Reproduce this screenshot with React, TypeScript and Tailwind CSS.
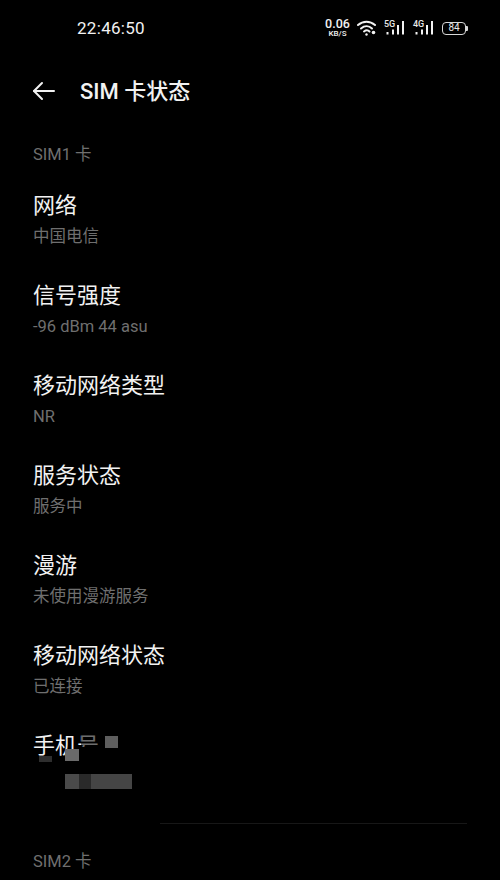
const FONT = "font-['Roboto','Noto_Sans_CJK_SC',sans-serif]"

const rows = [
  { title: '网络', value: '中国电信' },
  { title: '信号强度', value: '-96 dBm 44 asu' },
  { title: '移动网络类型', value: 'NR' },
  { title: '服务状态', value: '服务中' },
  { title: '漫游', value: '未使用漫游服务' },
  { title: '移动网络状态', value: '已连接' },
]

function Row({ title, value }: { title: string; value: string }) {
  return (
    <div className="flex h-[90px] flex-col">
      <div className="h-[32px] text-[22px] leading-[32px] text-[#f2f2f2]">{title}</div>
      <div className="mt-[5px] h-[20px] text-[16.5px] leading-[20px] text-[#6f6f6f]">{value}</div>
    </div>
  )
}

function Bars({ label }: { label: string }) {
  return (
    <div className="relative h-[16px] w-[20px]">
      <span className="absolute left-0 top-0 text-[9px] font-medium leading-[9px] text-[#e8e8e8]">{label}</span>
      <svg className="absolute left-0 top-0" width="20" height="16" viewBox="0 0 20 16" fill="#f2f2f2">
        <rect x="2.500" y="12" width="2" height="2.500" />
        <rect x="8" y="9.500" width="2" height="5" />
        <rect x="13" y="5" width="2" height="9.500" />
        <rect x="18" y="1" width="2" height="13.500" />
      </svg>
    </div>
  )
}

function Mosaic({ className }: { className: string }) {
  return <div className={`absolute ${className}`} />
}

export default function App() {
  return (
    <div className={`h-[880px] w-[500px] overflow-hidden bg-black ${FONT}`}>
      <div className="flex h-[56px] items-center pl-[77px] pr-[32px]">
        <span className="mt-[1px] text-[17px] tracking-[0.3px] text-[#f2f2f2]">22:46:50</span>
        <div className="ml-auto flex items-center">
          <div className="flex w-[25px] flex-col items-center gap-[2px] font-medium text-[#f2f2f2]">
            <span className="text-[12.5px] leading-[10px]">0.06</span>
            <span className="text-[8px] leading-[6px]">KB/S</span>
          </div>
          <svg className="ml-[7px]" width="20" height="16" viewBox="0 0 20 16" fill="none" stroke="#f2f2f2" strokeWidth="2" strokeLinecap="round">
            <path d="M1 5c5-4.500 12-4.500 17 0" />
            <path d="M4 8.500c3.500-3 8-3 11 0" />
            <path d="M7 11.500c2-1.500 4-1.500 5.500 0" />
            <circle cx="9.500" cy="14.500" r="1.200" fill="#f2f2f2" stroke="none" />
            <circle cx="16.500" cy="12.500" r="1.800" fill="#f2f2f2" stroke="none" />
          </svg>
          <div className="ml-[7px]"><Bars label="5G" /></div>
          <div className="ml-[9px]"><Bars label="4G" /></div>
          <div className="ml-[9px] flex items-center">
            <div className="flex h-[13px] w-[24px] items-center justify-center rounded-[4px] border border-[#d8d8d8] text-[10px] leading-none text-[#e8e8e8]">84</div>
            <div className="h-[5px] w-[2px] rounded-r-[1px] bg-[#d8d8d8]" />
          </div>
        </div>
      </div>

      <div className="flex h-[70px] items-center pl-[32px]">
        <svg width="23" height="20" viewBox="0 0 23 20" fill="none" stroke="#f2f2f2" strokeWidth="2" strokeLinecap="round" strokeLinejoin="round">
          <path d="M22 10H2" />
          <path d="M10 2l-8 8 8 8" />
        </svg>
        <h1 className="ml-[25px] text-[22px] font-medium text-[#f2f2f2]">SIM 卡状态</h1>
      </div>

      <div className="px-[33px]">
        <div className="mt-[18px] h-[22px] text-[16.5px] leading-[22px] text-[#6f6f6f]">SIM1 卡</div>
        <div className="mt-[24px]">
          {rows.map((r) => (
            <Row key={r.title} title={r.title} value={r.value} />
          ))}
          <div className="relative h-[62px]">
            <div className="h-[32px] text-[22px] leading-[32px] text-[#f2f2f2]">手机号码</div>
            <Mosaic className="left-[44px] top-[17px] h-[15px] w-[44px] bg-black" />
            <Mosaic className="left-[66px] top-[0px] h-[17px] w-[24px] bg-black" />
            <Mosaic className="left-[48px] top-[3px] h-[14px] w-[20px] bg-black/55" />
            <Mosaic className="left-[72px] top-[6px] h-[12px] w-[13px] bg-[#5e5e5e]" />
            <Mosaic className="left-[32px] top-[19px] h-[12px] w-[14px] bg-[#6a6a6a]" />
            <Mosaic className="left-[6px] top-[26px] h-[6px] w-[13px] bg-[#2e2e2e]" />
            <Mosaic className="left-[32px] top-[44px] h-[15px] w-[14px] bg-[#4a4a4a]" />
            <Mosaic className="left-[46px] top-[44px] h-[15px] w-[12px] bg-[#2a2a2a]" />
            <Mosaic className="left-[58px] top-[44px] h-[15px] w-[41px] bg-[#454545]" />
          </div>
        </div>
      </div>

      <div className="ml-[160px] mr-[33px] mt-[31px] h-px bg-[#171717]" />

      <div className="px-[33px]">
        <div className="mt-[27px] h-[22px] text-[16.5px] leading-[22px] text-[#6f6f6f]">SIM2 卡</div>
      </div>
    </div>
  )
}
